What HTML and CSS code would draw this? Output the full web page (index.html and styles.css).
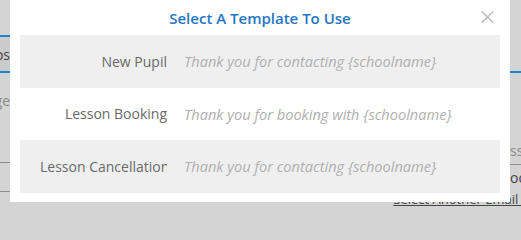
FILE: index.html
```html
<!DOCTYPE html>
<html lang="en">
<head>
<meta charset="utf-8">
<title>Select A Template To Use</title>
<link rel="stylesheet" href="styles.css">
</head>
<body>
<div class="page">
  <div class="columns">
    <div class="side side-left">
      <div class="tab"><span>Photos</span></div>
      <div class="frag frag-ge"><span>Message</span></div>
      <div class="rule rule-1"></div>
      <div class="rule rule-2"></div>
    </div>
    <div class="middle"></div>
    <div class="side side-right">
      <div class="blue-rule"></div>
      <div class="frag frag-ss">ss</div>
      <div class="rule"></div>
      <div class="frag frag-oo">oo</div>
    </div>
  </div>
  <div class="footer-link"><a href="#">Select Another Email .</a></div>
</div>

<div class="modal">
  <div class="modal-header">
    <h1 class="modal-title">Select A Template To Use</h1>
    <button class="close" aria-label="Close">
      <svg width="13" height="12" viewBox="0 0 13 12"><path d="M0.8 0.5 L12.2 11.5 M12.2 0.5 L0.8 11.5" stroke="#bdbdbd" stroke-width="1.6" fill="none"/></svg>
    </button>
  </div>
  <div class="template-list">
    <div class="template-row shaded">
      <div class="label">New Pupil</div>
      <div class="preview">Thank you for contacting {schoolname}</div>
    </div>
    <div class="template-row">
      <div class="label">Lesson Booking</div>
      <div class="preview">Thank you for booking with {schoolname}</div>
    </div>
    <div class="template-row shaded">
      <div class="label">Lesson Cancellation</div>
      <div class="preview">Thank you for contacting {schoolname}</div>
    </div>
  </div>
</div>
</body>
</html>
```

FILE: styles.css
```css
html, body {
  margin: 0;
  padding: 0;
}
body {
  width: 521px;
  height: 211px;
  overflow: hidden;
  background: #d4d4d4;
  font-family: "Open Sans", "Liberation Sans", sans-serif;
  position: relative;
}
.page {
  height: 211px;
  display: flex;
  flex-direction: column;
}
.columns {
  display: flex;
  height: 192px;
}
.side {
  overflow: hidden;
  display: flex;
  flex-direction: column;
  font-size: 14px;
  white-space: nowrap;
}
.side-left {
  width: 10px;
}
.middle {
  flex: 1;
}
.side-right {
  width: 11px;
}
.tab {
  margin-top: 35px;
  height: 35px;
  border-top: 2px solid #1a86d0;
  border-bottom: 2px solid #1a86d0;
  background: #cbcbcb;
  display: flex;
  justify-content: flex-end;
  align-items: center;
  color: #444;
}
.frag {
  display: flex;
  justify-content: flex-end;
  color: #8a8a8a;
  line-height: 20px;
}
.frag-ge {
  margin-top: 18px;
}
.rule {
  height: 1px;
  background: #8c8c8c;
}
.rule-1 {
  margin-top: 51px;
}
.rule-2 {
  margin-top: 28px;
}
.blue-rule {
  margin-top: 71px;
  height: 2px;
  background: #1a86d0;
}
.side-right .frag {
  justify-content: flex-start;
}
.frag-ss {
  margin-top: 68px;
  margin-bottom: 3px;
}
.frag-oo {
  margin-top: 3px;
  color: #444;
}
.footer-link {
  display: flex;
  justify-content: flex-end;
  font-size: 13px;
  line-height: 14px;
  margin-right: -4px;
}
.footer-link a {
  color: #444;
  text-decoration: underline;
}

.modal {
  position: absolute;
  left: 10px;
  top: 0;
  width: 500px;
  height: 202px;
  background: #fff;
  padding: 0 10px 10px;
  box-sizing: border-box;
}
.modal-header {
  height: 35px;
  display: flex;
  align-items: center;
  justify-content: center;
  position: relative;
}
.modal-title {
  margin: 0;
  font-size: 15px;
  font-weight: 600;
  color: #1f76c4;
}
.close {
  position: absolute;
  right: 6px;
  top: 11px;
  width: 13px;
  height: 12px;
  padding: 0;
  border: 0;
  background: none;
  display: flex;
}
.template-row {
  height: 52.5px;
  display: flex;
  align-items: center;
  font-size: 14px;
  white-space: nowrap;
}
.template-row.shaded {
  background: #efefef;
}
.label {
  width: 127px;
  padding-left: 20px;
  text-align: right;
  overflow: hidden;
  color: #6a6a6a;
  flex: none;
}
.preview {
  margin-left: 17px;
  font-style: italic;
  font-size: 14.6px;
  color: #b0b0b0;
}
```
